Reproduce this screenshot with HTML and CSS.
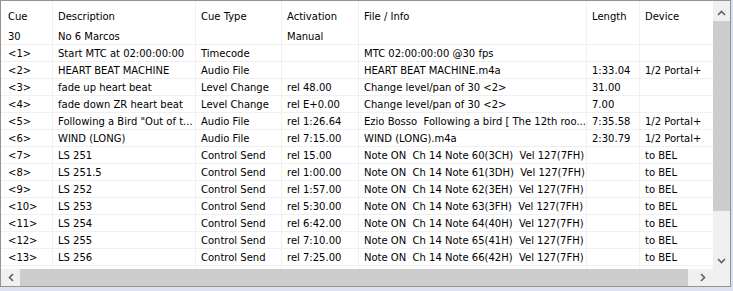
FILE: index.html
```html
<!DOCTYPE html>
<html>
<head>
<meta charset="utf-8">
<link rel="stylesheet" href="styles.css">
</head>
<body>
<div class="frame">
  <div class="list">
    <div class="row head">
      <div class="cell"><span>Cue</span><span>30</span></div>
      <div class="cell"><span>Description</span><span>No 6 Marcos</span></div>
      <div class="cell"><span>Cue Type</span><span></span></div>
      <div class="cell"><span>Activation</span><span>Manual</span></div>
      <div class="cell"><span>File / Info</span><span></span></div>
      <div class="cell"><span>Length</span><span></span></div>
      <div class="cell"><span>Device</span><span></span></div>
    </div>
    <div class="row"><div class="cell">&lt;1&gt;</div><div class="cell">Start MTC at 02:00:00:00</div><div class="cell">Timecode</div><div class="cell"></div><div class="cell">MTC 02:00:00:00 @30 fps</div><div class="cell"></div><div class="cell"></div></div>
    <div class="row"><div class="cell">&lt;2&gt;</div><div class="cell">HEART BEAT MACHINE</div><div class="cell">Audio File</div><div class="cell"></div><div class="cell">HEART BEAT MACHINE.m4a</div><div class="cell">1:33.04</div><div class="cell">1/2 Portal+</div></div>
    <div class="row"><div class="cell">&lt;3&gt;</div><div class="cell">fade up heart beat</div><div class="cell">Level Change</div><div class="cell">rel 48.00</div><div class="cell">Change level/pan of 30 &lt;2&gt;</div><div class="cell">31.00</div><div class="cell"></div></div>
    <div class="row"><div class="cell">&lt;4&gt;</div><div class="cell">fade down ZR heart beat</div><div class="cell">Level Change</div><div class="cell">rel E+0.00</div><div class="cell">Change level/pan of 30 &lt;2&gt;</div><div class="cell">7.00</div><div class="cell"></div></div>
    <div class="row"><div class="cell">&lt;5&gt;</div><div class="cell">Following a Bird "Out of t...</div><div class="cell">Audio File</div><div class="cell">rel 1:26.64</div><div class="cell">Ezio Bosso  Following a bird [ The 12th roo...</div><div class="cell">7:35.58</div><div class="cell">1/2 Portal+</div></div>
    <div class="row"><div class="cell">&lt;6&gt;</div><div class="cell">WIND (LONG)</div><div class="cell">Audio File</div><div class="cell">rel 7:15.00</div><div class="cell">WIND (LONG).m4a</div><div class="cell">2:30.79</div><div class="cell">1/2 Portal+</div></div>
    <div class="row"><div class="cell">&lt;7&gt;</div><div class="cell">LS 251</div><div class="cell">Control Send</div><div class="cell">rel 15.00</div><div class="cell">Note ON  Ch 14 Note 60(3CH)  Vel 127(7FH)</div><div class="cell"></div><div class="cell">to BEL</div></div>
    <div class="row"><div class="cell">&lt;8&gt;</div><div class="cell">LS 251.5</div><div class="cell">Control Send</div><div class="cell">rel 1:00.00</div><div class="cell">Note ON  Ch 14 Note 61(3DH)  Vel 127(7FH)</div><div class="cell"></div><div class="cell">to BEL</div></div>
    <div class="row"><div class="cell">&lt;9&gt;</div><div class="cell">LS 252</div><div class="cell">Control Send</div><div class="cell">rel 1:57.00</div><div class="cell">Note ON  Ch 14 Note 62(3EH)  Vel 127(7FH)</div><div class="cell"></div><div class="cell">to BEL</div></div>
    <div class="row"><div class="cell">&lt;10&gt;</div><div class="cell">LS 253</div><div class="cell">Control Send</div><div class="cell">rel 5:30.00</div><div class="cell">Note ON  Ch 14 Note 63(3FH)  Vel 127(7FH)</div><div class="cell"></div><div class="cell">to BEL</div></div>
    <div class="row"><div class="cell">&lt;11&gt;</div><div class="cell">LS 254</div><div class="cell">Control Send</div><div class="cell">rel 6:42.00</div><div class="cell">Note ON  Ch 14 Note 64(40H)  Vel 127(7FH)</div><div class="cell"></div><div class="cell">to BEL</div></div>
    <div class="row"><div class="cell">&lt;12&gt;</div><div class="cell">LS 255</div><div class="cell">Control Send</div><div class="cell">rel 7:10.00</div><div class="cell">Note ON  Ch 14 Note 65(41H)  Vel 127(7FH)</div><div class="cell"></div><div class="cell">to BEL</div></div>
    <div class="row"><div class="cell">&lt;13&gt;</div><div class="cell">LS 256</div><div class="cell">Control Send</div><div class="cell">rel 7:25.00</div><div class="cell">Note ON  Ch 14 Note 66(42H)  Vel 127(7FH)</div><div class="cell"></div><div class="cell">to BEL</div></div>
    <div class="row"><div class="cell"></div><div class="cell"></div><div class="cell"></div><div class="cell"></div><div class="cell"></div><div class="cell"></div><div class="cell"></div></div>
  </div>
  <div class="vscroll">
    <div class="sbtn vbtn"><svg width="9" height="6" viewBox="0 0 9 6"><path d="M1 5 L4.5 1.5 L8 5" fill="none" stroke="#606060" stroke-width="1.6"/></svg></div>
    <div class="vthumb"></div>
    <div class="space"></div>
    <div class="sbtn vbtn"><svg width="9" height="6" viewBox="0 0 9 6"><path d="M1 1 L4.5 4.5 L8 1" fill="none" stroke="#606060" stroke-width="1.6"/></svg></div>
  </div>
  <div class="hscroll">
    <div class="sbtn hbtn-l"><svg width="6" height="9" viewBox="0 0 6 9"><path d="M5 1 L1.5 4.5 L5 8" fill="none" stroke="#606060" stroke-width="1.6"/></svg></div>
    <div class="hthumb"></div>
    <div class="space"></div>
    <div class="sbtn hbtn-r"><svg width="6" height="9" viewBox="0 0 6 9"><path d="M1 1 L4.5 4.5 L1 8" fill="none" stroke="#606060" stroke-width="1.6"/></svg></div>
  </div>
  <div class="corner"></div>
</div>
</body>
</html>
```
FILE: styles.css
```css
body {
  margin: 0;
  background: #dde1f2;
  font-family: "DejaVu Sans", sans-serif;
  font-size: 10px;
  color: #000;
}
.frame {
  width: 731px;
  height: 287px;
  box-sizing: border-box;
  border: 1px solid #939393;
  background: #fff;
  display: grid;
  grid-template-columns: 712px 17px;
  grid-template-rows: 268px 17px;
}
.list {
  overflow: hidden;
}
.row {
  display: grid;
  grid-template-columns: 52px 143px 86px 77px 228px 53px 73px;
  height: 17px;
}
.cell {
  box-sizing: border-box;
  border-right: 1px solid #f0f0f0;
  border-bottom: 1px solid #f0f0f0;
  padding-left: 5px;
  padding-top: 2px;
  line-height: 14px;
  white-space: pre;
  overflow: hidden;
}
.cell:first-child {
  padding-left: 7px;
}
.cell:last-child {
  border-right: none;
}
.head {
  height: 44px;
}
.head .cell {
  padding-top: 8px;
  line-height: 16px;
  display: flex;
  flex-direction: column;
  gap: 4px;
}
.head .cell span {
  height: 16px;
}
.vscroll {
  background: #f0f0f0;
  display: flex;
  flex-direction: column;
}
.sbtn {
  display: flex;
  align-items: center;
  justify-content: center;
}
.vbtn {
  height: 20px;
  padding-top: 3px;
  box-sizing: border-box;
}
.vthumb {
  height: 190px;
  background: #cdcdcd;
}
.space {
  flex: 1;
}
.hscroll {
  background: #f0f0f0;
  display: flex;
}
.hbtn-l {
  width: 19px;
}
.hbtn-r {
  width: 20px;
}
.hthumb {
  width: 668px;
  background: #cdcdcd;
}
.corner {
  background: #f0f0f0;
}
```
